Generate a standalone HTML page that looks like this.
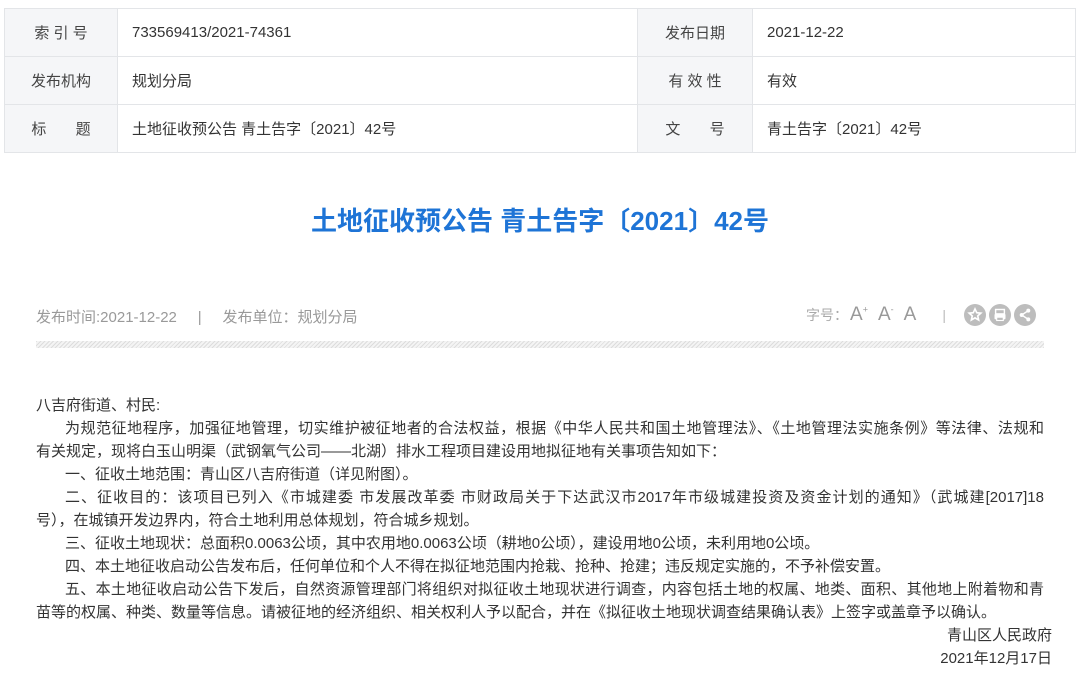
<!DOCTYPE html>
<html><head><meta charset="utf-8"><style>
*{margin:0;padding:0;box-sizing:border-box}
body{width:1080px;height:673px;background:#fff;font-family:"Liberation Sans","Noto Sans CJK SC",sans-serif;color:#333;position:relative;overflow:hidden}
table{position:absolute;left:4px;top:8px;width:1072px;border-collapse:collapse;font-size:15px}
td{height:48px;border:1px solid #e3e5e8;padding:0 14px;color:#333}
td.l{background:#f5f6f8;text-align:center;width:113px;color:#444}
.title{position:absolute;top:201px;left:0;width:1080px;text-align:center;font-size:26px;font-weight:bold;color:#1e74d6}
.meta{position:absolute;top:306px;left:36px;font-size:15px;color:#999}
.tools{position:absolute;top:304px;left:806px;font-size:14px;color:#aaa;display:flex;align-items:center}
.stripe{position:absolute;left:36px;top:341px;width:1008px;height:7px;background:repeating-linear-gradient(135deg,#ddd 0 1px,#f4f4f4 1px 3px)}
.body{position:absolute;top:394px;left:36px;width:1008px;font-size:15px;line-height:23px;color:#333}
.j{text-align:justify;text-align-last:justify}
.i{padding-left:29px}
.r{text-align:right;padding-right:0;margin-right:-8px}
.ic{display:inline-block;width:22px;height:22px;border-radius:50%;background:#bdbdbd;margin-right:3px;position:relative}
</style></head><body>
<table>
<tr><td class="l">索 引 号</td><td style="width:520px">733569413/2021-74361</td><td class="l" style="width:115px">发布日期</td><td>2021-12-22</td></tr>
<tr><td class="l">发布机构</td><td>规划分局</td><td class="l">有 效 性</td><td>有效</td></tr>
<tr><td class="l">标&nbsp;&nbsp;&nbsp;&nbsp;&nbsp;&nbsp;&nbsp;题</td><td>土地征收预公告 青土告字〔2021〕42号</td><td class="l">文&nbsp;&nbsp;&nbsp;&nbsp;&nbsp;&nbsp;&nbsp;号</td><td>青土告字〔2021〕42号</td></tr>
</table>
<div class="title">土地征收预公告 青土告字〔2021〕42号</div>
<div class="meta">发布时间:2021-12-22&nbsp;&nbsp;&nbsp;&nbsp;&nbsp;|&nbsp;&nbsp;&nbsp;&nbsp;&nbsp;发布单位：规划分局</div>
<div class="tools"><span>字号：</span><span style="font-size:19px;color:#999;margin-left:2px">A<sup style="font-size:9px">+</sup></span><span style="font-size:19px;color:#999;margin-left:10px">A<sup style="font-size:9px">-</sup></span><span style="font-size:19px;color:#999;margin-left:10px">A</span><span style="margin:0 18px 0 26px;color:#bbb">|</span><span class="ic"><svg width="22" height="22" viewBox="0 0 20 20"><path d="M10 4.5l1.6 3.4 3.7.4-2.8 2.5.8 3.7L10 12.6l-3.3 1.9.8-3.7-2.8-2.5 3.7-.4z" fill="none" stroke="#fff" stroke-width="1.5"/></svg></span><span class="ic"><svg width="22" height="22" viewBox="0 0 20 20"><rect x="6" y="5" width="8" height="4" fill="none" stroke="#fff" stroke-width="1.3"/><rect x="5" y="9" width="10" height="5" rx="1" fill="#fff"/><rect x="7" y="12" width="6" height="3" fill="#bdbdbd" stroke="#fff"/></svg></span><span class="ic"><svg width="22" height="22" viewBox="0 0 20 20"><circle cx="13" cy="6" r="1.8" fill="#fff"/><circle cx="7" cy="10" r="1.8" fill="#fff"/><circle cx="13" cy="14" r="1.8" fill="#fff"/><path d="M13 6L7 10l6 4" stroke="#fff" stroke-width="1.3" fill="none"/></svg></span></div>
<div class="stripe"></div>
<div class="body">
<div>八吉府街道、村民:</div>
<div class="i j">为规范征地程序，加强征地管理，切实维护被征地者的合法权益，根据《中华人民共和国土地管理法》、《土地管理法实施条例》等法律、法规和</div>
<div>有关规定，现将白玉山明渠（武钢氧气公司——北湖）排水工程项目建设用地拟征地有关事项告知如下：</div>
<div class="i">一、征收土地范围：青山区八吉府街道（详见附图）。</div>
<div class="i j">二、征收目的：该项目已列入《市城建委 市发展改革委 市财政局关于下达武汉市2017年市级城建投资及资金计划的通知》（武城建[2017]18</div>
<div>号），在城镇开发边界内，符合土地利用总体规划，符合城乡规划。</div>
<div class="i">三、征收土地现状：总面积0.0063公顷，其中农用地0.0063公顷（耕地0公顷），建设用地0公顷，未利用地0公顷。</div>
<div class="i">四、本土地征收启动公告发布后，任何单位和个人不得在拟征地范围内抢栽、抢种、抢建；违反规定实施的，不予补偿安置。</div>
<div class="i j">五、本土地征收启动公告下发后，自然资源管理部门将组织对拟征收土地现状进行调查，内容包括土地的权属、地类、面积、其他地上附着物和青</div>
<div>苗等的权属、种类、数量等信息。请被征地的经济组织、相关权利人予以配合，并在《拟征收土地现状调查结果确认表》上签字或盖章予以确认。</div>
<div class="r">青山区人民政府</div>
<div class="r">2021年12月17日</div>
</div>
</body></html>
